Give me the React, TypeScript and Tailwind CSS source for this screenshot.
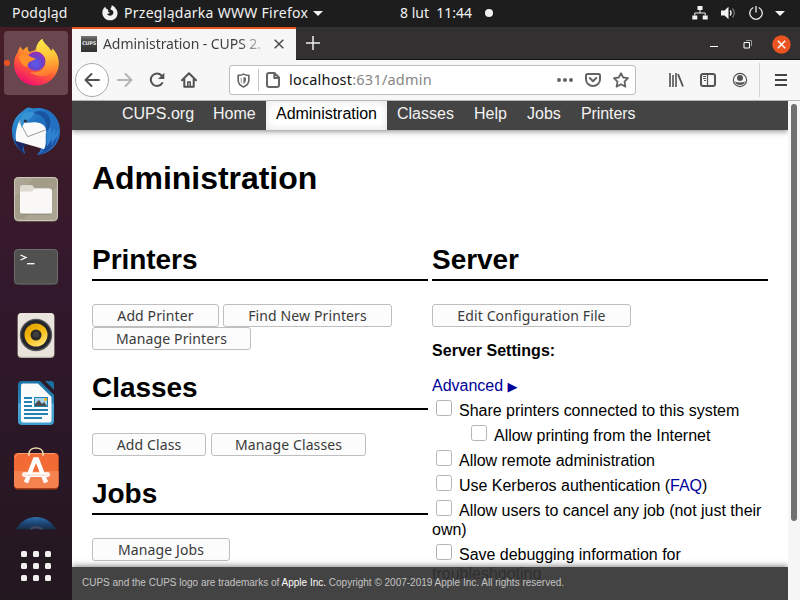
import React from "react";

const ui = "font-['Noto_Sans','Open_Sans',sans-serif]";

function FirefoxIcon() {
  return (
    <svg viewBox="0 0 64 64" className="block size-16">
      <defs>
        <linearGradient id="ffBody" x1="0.8" y1="0.1" x2="0.35" y2="1">
          <stop offset="0" stopColor="#ffe84a" />
          <stop offset="0.3" stopColor="#ffa62e" />
          <stop offset="0.62" stopColor="#ff5a36" />
          <stop offset="1" stopColor="#f0106f" />
        </linearGradient>
        <linearGradient id="ffFlame" x1="0.3" y1="0" x2="0.6" y2="1">
          <stop offset="0" stopColor="#fff04a" />
          <stop offset="0.5" stopColor="#ffcb3a" />
          <stop offset="1" stopColor="#ff7a2e" />
        </linearGradient>
        <radialGradient id="ffGlobe" cx="0.5" cy="0.65" r="0.6">
          <stop offset="0" stopColor="#5a5cf0" />
          <stop offset="0.6" stopColor="#6a42c8" />
          <stop offset="1" stopColor="#9530b8" />
        </radialGradient>
      </defs>
      <path d="M16.7 15.5 C17 18 18.5 18.8 19.5 19 C20.5 17.5 22 16.2 23.8 15.8 C23.6 18 24 20 25.5 21 L33 18.5 C32.5 14 35 10 38.3 8 C39.5 12.5 44 14.5 46.5 19 C47.5 20.5 48 20 48.5 17.5 C53 22 54.8 27 54.8 32 C54.5 45 44.5 54.5 32 54.5 C19.5 54.5 10 45 10 33 C10 28 11.5 24 13.5 22 C14 19.5 15 17 16.7 15.5 Z" fill="url(#ffBody)" />
      <path d="M31.5 19.5 C32 14 35 10 38.3 8 C39.5 12.5 44 14.5 46.5 19 C47.5 20.5 48 20 48.5 17.5 C54 25 53 37 46 43 C40 47 31 45 26 41 C35 43 43 38 41.500 30 C40.5 24 35 21.5 31.5 19.5 Z" fill="url(#ffFlame)" opacity="0.8" />
      <circle cx="31.8" cy="30.2" r="9.6" fill="url(#ffGlobe)" />
      <path d="M15 25 C18 22.500 24 23.500 27 26 C29 27 30.500 27.300 32 27.300 C30.500 29.500 27 30 25.500 31 C23.500 32.500 23.500 34 23.500 36.500 C17 34 15 29 15 25 Z" fill="#ff8f2b" />
    </svg>
  );
}

function ThunderbirdIcon() {
  return (
    <svg viewBox="0 0 64 64" className="block size-16">
      <defs>
        <linearGradient id="tbBody" x1="0" y1="0" x2="1" y2="1">
          <stop offset="0" stopColor="#36a0e0" />
          <stop offset="0.4" stopColor="#2070c0" />
          <stop offset="1" stopColor="#2a6fc4" />
        </linearGradient>
      </defs>
      <path d="M24.500 8.500 L30 9.500 C44 7 56 17 56 32 C56 45 46 55 33 56 L36 52 L38 46 L20 44 C19 49 20 52 21.500 55 C12 50 8 41 8 32 C8 24 12 16 19 12 C21 10 22 9 24.500 8.500 Z" fill="url(#tbBody)" />
      <path d="M10.500 41 L23 45.500 C18 47 17 51 21.500 55 C16 52 12.500 47 10.500 41 Z" fill="#1b2a66" />
      <path d="M28 15 C38 13 44 22 42 33 C47 28 48 20 43 15 C39 11 32 11 28 15 Z" fill="#1a539f" />
      <path d="M16 21 C20 25 26 23.500 30 23.300 C37 23 43 27 42 33 C41 38 43 45 40.300 50.300 L12 42 C11 34 13 26 16 21 Z" fill="#fafafa" />
      <path d="M15 22 L23.700 37.700 L41.500 31" fill="none" stroke="#8f9396" strokeWidth="0.900" />
      <path d="M16 22 C17 15 23 11 31 14 C28 17 27 19 24 21 C21 22.500 19 25 18 29 Z" fill="#3793d4" />
      <circle cx="21.300" cy="22" r="1.600" fill="#2b2b3b" />
      <path d="M42 33 C43 39 45 45 39 53 C49 49 54 41 55 30 L51 36 L51 29 L47 35 L47 28 Z" fill="#2f82cf" />
      <path d="M40 51 L43 43 L43 48 L48 40 L47 47 L53 37 C52 46 44 54 33 56 C37 54 39 53 40 51 Z" fill="#1b4f9e" />
    </svg>
  );
}

function FilesIcon() {
  return (
    <svg viewBox="0 0 64 64" className="block size-16">
      <rect x="10" y="10.500" width="44" height="44" rx="4.500" fill="#8b8470" />
      <rect x="10" y="10" width="44" height="43" rx="4.500" fill="#aca593" />
      <path d="M11 30 L30 11 H50 Q53 11 53 14 V20 L20 52 H14 Q11 52 11 49 Z" fill="#a39c88" />
      <rect x="10.500" y="10.500" width="43" height="43" rx="4" fill="none" stroke="#cbc6b8" />
      <path d="M16 21 Q16 18 19 18 H28 L31 21.500 H45 V30 H16 Z" fill="#dedad0" />
      <path d="M16 24.500 H28 L31 21.500 H45.500 Q48 21.500 48 24 V44.500 Q48 47 45.500 47 H18.500 Q16 47 16 44.500 Z" fill="#f9f8f6" />
      <path d="M17 47 H47" stroke="#7b7564" strokeWidth="0.700" />
    </svg>
  );
}

function TerminalIcon() {
  return (
    <svg viewBox="0 0 64 64" className="block size-16">
      <rect x="10" y="14.500" width="44" height="35.500" rx="4" fill="#333" />
      <rect x="10.500" y="14.500" width="43" height="34.500" rx="3.500" fill="#505050" stroke="#6b6b6b" />
      <path d="M16.500 20 L22 22.500 L16.500 25" fill="none" stroke="#fff" strokeWidth="1.300" />
      <path d="M23 28.700 H30.500" stroke="#fff" strokeWidth="1.300" />
    </svg>
  );
}

function RhythmboxIcon() {
  return (
    <svg viewBox="0 0 64 64" className="block size-16">
      <defs>
        <linearGradient id="cone" x1="0" y1="0" x2="0.600" y2="1">
          <stop offset="0" stopColor="#d99a00" />
          <stop offset="0.500" stopColor="#f3b80e" />
          <stop offset="1" stopColor="#ffe066" />
        </linearGradient>
      </defs>
      <rect x="13.500" y="10" width="37" height="45" rx="4" fill="#b7b1a2" />
      <rect x="14" y="10" width="36" height="43.700" rx="3.500" fill="#e9e5dc" />
      <circle cx="32" cy="32" r="16.200" fill="#5b5b5f" />
      <circle cx="32" cy="32" r="15" fill="#26262d" />
      <circle cx="32" cy="32" r="11.500" fill="url(#cone)" />
      <circle cx="32" cy="32" r="5.500" fill="#2a2925" />
      <circle cx="32" cy="31.500" r="3" fill="#3f3f3f" />
    </svg>
  );
}

function WriterIcon() {
  return (
    <svg viewBox="0 0 64 64" className="block size-16">
      <defs>
        <linearGradient id="writer" x1="0" y1="0" x2="0" y2="1">
          <stop offset="0" stopColor="#1a73a6" />
          <stop offset="0.500" stopColor="#2a86b8" />
          <stop offset="0.520" stopColor="#4aa8d6" />
          <stop offset="1" stopColor="#3f9dce" />
        </linearGradient>
      </defs>
      <path d="M18 10 H36 L50 24 V50 Q50 54 46 54 H18 Q14 54 14 50 V14 Q14 10 18 10 Z" fill="url(#writer)" />
      <path d="M41 10 H47 Q50 10 50 13 V19 Z" fill="#1c6f9f" />
      <path d="M19 12.500 H34 L47.500 26 V49 Q47.500 51.500 45 51.500 H19.500 Q17 51.500 17 49 V14.500 Q17 12.500 19 12.500 Z" fill="#fbfbfb" />
      <path d="M20 27 H28 M20 31 H28 M20 35 H28 M20 39 H44 M20 43 H44 M20 47 H38" stroke="#2383b5" strokeWidth="1.800" />
      <rect x="30" y="26" width="14" height="10" fill="#2383b5" />
      <rect x="31" y="27" width="12" height="8" fill="#a9d3ea" />
      <path d="M31 35 V33 L35 29 L38 33 L40 31 L43 35 Z" fill="#4b4b4b" />
      <circle cx="41.500" cy="28.500" r="1.500" fill="#f4b400" />
    </svg>
  );
}

function SoftwareIcon() {
  return (
    <svg viewBox="0 0 64 64" className="block size-16">
      <rect x="10" y="14.500" width="44.500" height="36" rx="4" fill="#a63c16" />
      <rect x="10" y="14" width="44.500" height="35" rx="4" fill="#f26a34" />
      <path d="M10 32 H54.500 V45 Q54.500 49 50.500 49 H14 Q10 49 10 45 Z" fill="#f58350" />
      <path d="M11 18 L14 14.500 H51" fill="none" stroke="#f79b72" />
      <path d="M25 17 V14.500 C25 7 39 7 39 14.500 V17" fill="none" stroke="#f3dfae" strokeWidth="1.500" />
      <path d="M22 43.500 L31 20.500 H33 L42 43.500" fill="none" stroke="#fff" strokeWidth="4.500" />
      <rect x="18" y="33.300" width="28" height="4.600" rx="2.300" fill="#fff" />
      <path d="M19.500 36 H44.500" stroke="#f7b396" strokeWidth="0.700" />
    </svg>
  );
}

function HelpIcon() {
  return (
    <svg viewBox="0 0 64 24" className="block h-6 w-16">
      <defs>
        <linearGradient id="helpFade" x1="0" y1="0" x2="0" y2="1">
          <stop offset="0" stopColor="#2f6fad" />
          <stop offset="0.500" stopColor="#1d4675" />
          <stop offset="1" stopColor="#1b2a48" />
        </linearGradient>
      </defs>
      <path d="M12 22.500 C16 15 23 10 32 10 C41 10 48 15 52 22.500 Z" fill="url(#helpFade)" />
      <path d="M26.500 22.200 C28 19.500 36 19.500 38 22.200" fill="none" stroke="#43495f" strokeWidth="2" />
    </svg>
  );
}

function Dock() {
  return (
    <aside className="flex w-[72px] shrink-0 flex-col items-center gap-1 overflow-hidden bg-linear-to-b from-[#451d26] via-[#32182c] via-45% to-[#231720] pt-1">
      <div className="relative rounded-[4px] bg-[#6a474e]">
        <FirefoxIcon />
        <span className="absolute top-[29px] left-0 size-[6px] rounded-full bg-[#e95420]" />
      </div>
      <ThunderbirdIcon />
      <FilesIcon />
      <TerminalIcon />
      <RhythmboxIcon />
      <WriterIcon />
      <SoftwareIcon />
      <HelpIcon />
      <div className="mt-4 grid grid-cols-3 gap-[6px]">
        {Array.from({ length: 9 }, (_, i) => (
          <span key={i} className="size-[6px] rounded-[1.5px] bg-[#f0efee]" />
        ))}
      </div>
    </aside>
  );
}

function TopBar() {
  return (
    <header className={`flex h-[27px] shrink-0 items-center bg-[#1d1d1d] pb-px text-[#f2f2f2] ${ui}`}>
      <span className="ml-3 w-[90px] text-[14px] leading-[26px] whitespace-nowrap tracking-[0.2px]">Podgląd</span>
      <svg viewBox="0 0 16 16" className="size-4">
        <path d="M1 4.500 C0 7 0 10 2 12.500 C5 16.500 12 16.300 14.500 12 C16.300 9 15.500 5 13.500 3.500 C13 1.800 11 .8 9.700 0 C10 2 8.500 3 8.500 4.500 C11 5 12 7 11 9 C9.500 11.500 6 11 5 8.800 C6.300 9 7.500 8.500 8 7.500 C6.500 7.500 5.500 6.500 6.500 5 L4 3.500 L3.200 1.800 C2.500 2.500 2 3 1 4.500 Z" fill="#f2f2f2" />
      </svg>
      <span className="ml-[6px] w-[185px] text-[14px] leading-[26px] whitespace-nowrap tracking-[0.28px]">Przeglądarka WWW Firefox</span>
      <span className="ml-1 h-0 w-0 border-x-[5px] border-t-[5px] border-x-transparent border-t-[#f2f2f2]" />
      <span className="ml-[77px] w-[72px] text-[14px] leading-[26px] whitespace-pre">8 lut  11:44</span>
      <span className="ml-[13px] size-2 rounded-full bg-[#f2f2f2]" />
      <div className="ml-auto flex items-center">
        <svg viewBox="0 0 16 14" className="mr-[13px] h-[14px] w-4">
          <path d="M5.500 0 h5 v4 h-5z M.3 9.500 h5 v4 h-5z M10.700 9.500 h5 v4 h-5z" fill="#f2f2f2" />
          <path d="M8 4 V7 M2.800 9.500 V7 H13.200 V9.500" fill="none" stroke="#f2f2f2" />
        </svg>
        <svg viewBox="0 0 16 14" className="mr-3 h-[14px] w-4">
          <path d="M0 4.500 H3.500 L7.500 .8 V13.200 L3.500 9.500 H0Z" fill="#f2f2f2" />
          <path d="M9.200 4.500 Q11 7 9.200 9.500" fill="none" stroke="#f2f2f2" strokeWidth="1.300" />
          <path d="M11.500 2.500 Q15.200 7 11.500 11.500" fill="none" stroke="#777" strokeWidth="1.200" />
        </svg>
        <svg viewBox="0 0 14 14" className="mr-[12px] size-[14px]">
          <path d="M4.300 1.500 A6.200 6.200 0 1 0 9.700 1.500 M7 0 V6.500" fill="none" stroke="#f2f2f2" strokeWidth="1.300" />
        </svg>
        <span className="mr-[15px] h-0 w-0 border-x-[5px] border-t-[5px] border-x-transparent border-t-[#f2f2f2]" />
      </div>
    </header>
  );
}

function TabStrip() {
  return (
    <div className={`flex h-[33px] shrink-0 border-b border-[#151515] bg-[#333031] ${ui}`}>
      <div className="-mb-px flex w-[224px] items-center border-t-2 border-[#e95420] bg-[#f6f6f6] pl-[9px]">
        <span className="-mt-px flex size-4 items-center justify-center bg-linear-to-b from-[#777] via-[#444] via-35% to-[#333] font-['DejaVu_Sans',sans-serif] text-[5px] font-bold tracking-[-0.2px] text-[#e4e4e4]">CUPS</span>
        <span className="-mt-[2px] ml-[6px] w-[166px] overflow-hidden bg-linear-to-r from-[#3c3c3c] from-82% to-transparent to-100% bg-clip-text text-[14px] whitespace-nowrap text-transparent tracking-[-0.08px]">Administration - CUPS 2.</span>
        <svg viewBox="0 0 10 10" className="-mt-px ml-[5px] size-[10px]">
          <path d="M.7.7 L9.300 9.300 M9.300.7 L.7 9.300" stroke="#4a4a4a" strokeWidth="1.500" />
        </svg>
      </div>
      <div className="flex w-[34px] items-center justify-center">
        <svg viewBox="0 0 14 14" className="size-[14px]">
          <path d="M7 0 V14 M0 7 H14" stroke="#eee" strokeWidth="1.500" />
        </svg>
      </div>
      <div className="ml-auto flex items-center pt-[2px] pr-[9px]">
        <span className="mt-[5px] mr-[25px] h-px w-2 bg-white" />
        <svg viewBox="0 0 9 9" className="mr-[20px] size-[9px]">
          <path d="M1 2.500 H6.500 V8 H1 Z" fill="none" stroke="#fff" />
          <path d="M3 .5 H8.500 V6" fill="none" stroke="#999" />
        </svg>
        <svg viewBox="0 0 19 19" className="size-[19px]">
          <circle cx="9.500" cy="9.500" r="9.200" fill="#e95420" />
          <path d="M5.800 5.800 L13.200 13.200 M13.200 5.800 L5.800 13.200" stroke="#fff" strokeWidth="1.500" />
        </svg>
      </div>
    </div>
  );
}

function Toolbar() {
  return (
    <div className={`flex h-[41px] shrink-0 items-center border-b border-[#b5b5b5] bg-[#f7f7f7] text-[#525254] ${ui}`}>
      <span className="ml-[3px] flex size-[34px] items-center justify-center rounded-full border border-[#a9a9a9] bg-white">
        <svg viewBox="0 0 16 16" className="size-4" fill="none" stroke="currentColor" strokeWidth="2" strokeLinecap="round" strokeLinejoin="round">
          <path d="M15 8 H1.500 M7.500 2 L1.500 8 L7.500 14" />
        </svg>
      </span>
      <svg viewBox="0 0 16 16" className="ml-2 size-4 text-[#b5b5b6]" fill="none" stroke="currentColor" strokeWidth="2" strokeLinecap="round" strokeLinejoin="round">
        <path d="M1 8 H14.500 M8.500 2 L14.500 8 L8.500 14" />
      </svg>
      <svg viewBox="0 0 16 16" className="ml-4 size-4" fill="none" stroke="currentColor" strokeWidth="2">
        <path d="M13.300 11 A6.200 6.200 0 1 1 12.500 3.500" strokeLinecap="round" />
        <path d="M15.300 0.800 V7 H9 Z" fill="currentColor" stroke="none" />
      </svg>
      <svg viewBox="0 0 16 16" className="ml-4 size-4" fill="none" stroke="currentColor" strokeWidth="2" strokeLinejoin="round" strokeLinecap="round">
        <path d="M1 8.300 L8 1.300 L15 8.300 M3.300 7.500 V14.700 H12.700 V7.500" />
        <path d="M6.800 14.500 V10 H9.200 V14.500" strokeWidth="1.500" />
      </svg>
      <div className="ml-8 flex h-[30px] w-[407px] items-center rounded-[3px] border border-[#bdbdbd] bg-white text-[#646466]">
        <svg viewBox="0 0 12 14" className="ml-[7px] h-[15px] w-[13px]">
          <path d="M1 2.200 Q4 2.200 6 1 Q8 2.200 11 2.200 V6.500 Q11 11 6 13 Q1 11 1 6.500 Z" fill="none" stroke="currentColor" strokeWidth="1.500" strokeLinejoin="round" />
          <path d="M6 3.700 V10.300 Q8.300 9 8.300 6.500 V4.500 Z" fill="currentColor" />
          <path d="M3.800 4.500 V7 Q3.800 8.500 4.600 9.500" fill="none" stroke="currentColor" strokeWidth="0.600" />
        </svg>
        <span className="ml-[8px] h-[22px] w-px bg-[#c4c4c4]" />
        <svg viewBox="0 0 14 16" className="ml-[7px] h-[16px] w-[14px]" fill="none" stroke="currentColor" strokeWidth="2" strokeLinejoin="round">
          <path d="M3 1 H8.500 L13 5.500 V13 Q13 15 11 15 H3 Q1 15 1 13 V3 Q1 1 3 1 Z M8.300 1 V6 H13" />
        </svg>
        <span className="ml-[9px] text-[14.5px] whitespace-nowrap text-[#111] tracking-[0.22px]">localhost<span className="text-[#858585]">:631/admin</span></span>
        <span className="ml-auto flex gap-[2px]">
          {[0, 1, 2].map((i) => <span key={i} className="size-1 rounded-full bg-current" />)}
        </span>
        <svg viewBox="0 0 16 14" className="mt-[-1px] ml-3 h-[14px] w-4" fill="none" stroke="currentColor" strokeWidth="2" strokeLinejoin="round" strokeLinecap="round">
          <path d="M2.500 1 H13.500 Q15 1 15 2.500 V6.500 A7 6.500 0 0 1 1 6.500 V2.500 Q1 1 2.500 1 Z M4.800 5 L8 8.200 L11.200 5" />
        </svg>
        <svg viewBox="0 0 16 16" className="mr-[6px] ml-3 size-4" fill="none" stroke="currentColor" strokeWidth="1.800" strokeLinejoin="round">
          <path d="M8 1.200 L10.200 5.500 L15 6.200 L11.500 9.600 L12.400 14.600 L8 12.200 L3.600 14.600 L4.500 9.600 L1 6.200 L5.800 5.500 Z" />
        </svg>
      </div>
      <svg viewBox="0 0 16 14" className="ml-[32px] h-[14px] w-4" fill="none" stroke="currentColor">
        <path d="M2 0 V14 M5 2 V14 M8 0 V14" strokeWidth="1.600" />
        <path d="M10 1.200 L15 13.500" strokeWidth="1.800" />
      </svg>
      <svg viewBox="0 0 16 14" className="ml-4 h-[14px] w-4" fill="none" stroke="currentColor">
        <rect x="1" y="1" width="14" height="12" rx="2" strokeWidth="2" />
        <path d="M7.500 1 V13" strokeWidth="1.200" />
        <path d="M3 3.500 H6 M3 5.500 H6 M4 7.500 H6" />
      </svg>
      <svg viewBox="0 0 16 16" className="ml-4 size-4">
        <circle cx="8" cy="8" r="6.600" fill="none" stroke="currentColor" strokeWidth="1.200" />
        <circle cx="8" cy="6" r="3" fill="currentColor" />
        <path d="M3 9.500 Q5 10.500 8 10.500 T13 9.500 Q12 13 8 13 Q4 13 3 9.500Z" fill="currentColor" />
      </svg>
      <span className="ml-[11px] h-[34px] w-px bg-[#d5d5d5]" />
      <div className="ml-[15px] flex flex-col gap-[3px]">
        {[0, 1, 2].map((i) => <span key={i} className="h-[2px] w-3 bg-[#444]" />)}
      </div>
    </div>
  );
}

function SectionTitle({ children, className = "leading-[39px]" }: { children: React.ReactNode; className?: string }) {
  return <h2 className={`h-[41px] border-b-2 border-black text-[28px] font-bold tracking-[-0.05px] ${className}`}>{children}</h2>;
}

function Button({ children, className }: { children: React.ReactNode; className: string }) {
  return (
    <button className={`flex h-[23px] shrink-0 items-center justify-center rounded-[3px] border border-[#bfbfbf] bg-[#fcfcfc] text-[14px] leading-[19px] whitespace-nowrap text-[#3a3a3a] tracking-[0.12px] ${ui} ${className}`}>
      {children}
    </button>
  );
}

function Option({ children, className = "" }: { children: React.ReactNode; className?: string }) {
  return (
    <div className={`flex h-[25px] items-start pl-1 whitespace-nowrap ${className}`}>
      <span className="mt-[2px] mr-[7px] size-4 shrink-0 rounded-[2.5px] border border-[#b5b5b5] bg-white" />
      <span className="mt-[3px] leading-[19px] tracking-[-0.02px]">{children}</span>
    </div>
  );
}

const link = "text-[#000099]";

function CupsPage() {
  return (
    <main className="relative flex min-h-0 w-[716px] flex-col overflow-hidden bg-white font-['Liberation_Sans',Arial,sans-serif] text-[16px] text-black">
      <nav className="flex h-[29px] shrink-0 bg-[#444] pl-10 leading-[25px] text-[#f3f3f3] shadow-[0_1px_6px_rgba(0,0,0,0.5)]">
        <a className="w-[91px] pl-[10px]">CUPS.org</a>
        <a className="w-[63px] pl-[10px]">Home</a>
        <a className="w-[121px] bg-white pl-[10px] text-black shadow-[inset_0_0_8px_rgba(0,0,0,0.12)] tracking-[-0.03px]">Administration</a>
        <a className="w-[77px] pl-[10px]">Classes</a>
        <a className="w-[53px] pl-[10px]">Help</a>
        <a className="w-[54px] pl-[10px]">Jobs</a>
        <a className="pl-[10px] tracking-[-0.1px]">Printers</a>
      </nav>
      <div className="px-5">
        <h1 className="mt-[28px] text-[32px] leading-[40px] font-bold tracking-[-0.04px]">Administration</h1>
        <div className="mt-[42px] flex gap-1">
          <section className="w-[336px]">
            <SectionTitle>Printers</SectionTitle>
            <div className="mt-[23px] flex flex-wrap gap-x-[4px]">
              <Button className="w-[127px]">Add Printer</Button>
              <Button className="w-[169px]">Find New Printers</Button>
              <Button className="w-[159px]">Manage Printers</Button>
            </div>
            <div className="mt-[19px]"><SectionTitle className="leading-[37px]">Classes</SectionTitle></div>
            <div className="mt-[23px] flex gap-[5px]">
              <Button className="w-[114px]">Add Class</Button>
              <Button className="w-[155px]">Manage Classes</Button>
            </div>
            <div className="mt-[18px]"><SectionTitle>Jobs</SectionTitle></div>
            <div className="mt-[23px]"><Button className="w-[138px]">Manage Jobs</Button></div>
          </section>
          <section className="w-[336px]">
            <SectionTitle>Server</SectionTitle>
            <Button className="mt-[23px] w-[199px]">Edit Configuration File</Button>
            <p className="mt-[14px] leading-[20px] font-bold tracking-[0.03px]">Server Settings:</p>
            <p className={`mt-[15px] leading-[20px] ${link}`}>Advanced <span className="font-['DejaVu_Sans',sans-serif] text-[13px]">▶</span></p>
            <div className="mt-px">
              <Option>Share printers connected to this system</Option>
              <Option className="ml-[35px]">Allow printing from the Internet</Option>
              <Option>Allow remote administration</Option>
              <Option>Use Kerberos authentication (<a className={link}>FAQ</a>)</Option>
              <Option>Allow users to cancel any job (not just their</Option>
              <p className="-mt-[3px] h-[22px] leading-[19px]">own)</p>
              <Option>Save debugging information for</Option>
              <p className="-mt-[3px] leading-[19px]">troubleshooting</p>
            </div>
          </section>
        </div>
      </div>
      <footer className="absolute inset-x-0 bottom-0 h-[33px] bg-[#333]/92 pl-[10px] text-[10px] leading-[31px] whitespace-nowrap text-[#c4c4c4] shadow-[0_-1px_6px_rgba(0,0,0,0.5)]">
        CUPS and the CUPS logo are trademarks of <a className="text-white">Apple Inc.</a> Copyright © 2007-2019 Apple Inc. All rights reserved.
      </footer>
    </main>
  );
}

export default function App() {
  return (
    <div className="flex h-[600px] w-[800px] flex-col overflow-hidden">
      <TopBar />
      <div className="flex min-h-0 flex-1">
        <Dock />
        <div className="flex min-w-0 flex-1 flex-col">
          <TabStrip />
          <Toolbar />
          <div className="flex min-h-0 flex-1 bg-[#f6f6f6]">
            <CupsPage />
            <div className="mt-[3px] ml-[3px] h-[417px] w-[6px] rounded-full bg-[#707070]" />
          </div>
        </div>
      </div>
    </div>
  );
}
